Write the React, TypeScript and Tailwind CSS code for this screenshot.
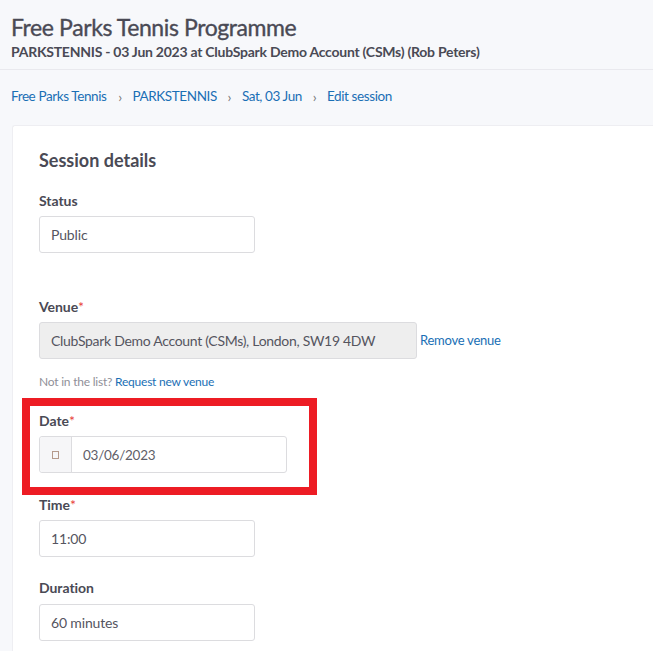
import React from "react";

const Label = ({ text, required }: { text: string; required?: boolean }) => (
  <div className="text-[14px] leading-[18px] font-bold text-[#4a4a55] h-[18px] tracking-[-0.05px]">
    {text}
    {required && <span className="text-[#e8403c] font-normal">*</span>}
  </div>
);

const Field = ({ value, className = "" }: { value: string; className?: string }) => (
  <div className={`h-[37px] w-[216px] bg-white border border-[#dcdcdf] rounded-[3px] flex items-center pl-[11px] text-[14px] text-[#55555f] tracking-[-0.15px] ${className}`}>
    {value}
  </div>
);

const Sep = () => <span className="text-[#777] text-[14px] w-[25px] flex justify-center">›</span>;

export default function App() {
  return (
    <div className="relative w-[653px] h-[651px] overflow-hidden bg-[#f7f8fb] font-['Lato','Liberation_Sans',sans-serif]">
      <div className="pl-[11px] pt-[13px] h-[70px] border-b border-[#e9e9ee]">
        <h1 className="text-[23px] leading-[29px] font-normal text-[#4a4a55] tracking-[-0.4px] [-webkit-text-stroke:0.35px_#4a4a55]">Free Parks Tennis Programme</h1>
        <p className="text-[14px] leading-[17px] mt-[1px] font-bold text-[#4a4a55] tracking-[-0.25px]">
          PARKSTENNIS - 03 Jun 2023 at ClubSpark Demo Account (CSMs) (Rob Peters)
        </p>
      </div>

      <div className="flex items-center pl-[11px] mt-[17px] h-[18px] text-[13.5px] text-[#1a6fb5] tracking-[-0.4px]">
        <span className="mr-[1px]">Free Parks Tennis</span>
        <Sep />
        <span>PARKSTENNIS</span>
        <Sep />
        <span>Sat, 03 Jun</span>
        <Sep />
        <span>Edit session</span>
      </div>

      <div className="ml-[12px] mt-[20px] bg-white border-t border-l border-[#eeeef2] rounded-tl-[3px] pl-[26px] pt-[23px] h-[600px]">
        <h2 className="text-[18px] leading-[22px] font-bold text-[#4a4a55]">Session details</h2>

        <div className="mt-[21px]">
          <Label text="Status" />
          <Field value="Public" className="mt-[6px]" />
        </div>

        <div className="mt-[45px]">
          <Label text="Venue" required />
          <div className="flex items-center mt-[6px]">
            <div className="h-[37px] w-[378px] bg-[#eeeeee] border border-[#dcdcdf] rounded-[3px] flex items-center pl-[11px] text-[14px] text-[#55555f] tracking-[-0.3px]">
              ClubSpark Demo Account (CSMs), London, SW19 4DW
            </div>
            <span className="ml-[3px] text-[13px] text-[#1a6fb5] tracking-[-0.25px]">Remove venue</span>
          </div>
          <p className="mt-[14px] text-[12px] leading-[17px] text-[#8f8f98] tracking-[-0.22px]">
            Not in the list? <span className="text-[#1a6fb5]">Request new venue</span>
          </p>
        </div>

        <div className="mt-[22px]">
          <Label text="Date" required />
          <div className="flex mt-[6px] h-[37px] w-[248px] bg-white border border-[#dcdcdf] rounded-[3px]">
            <div className="w-[32px] bg-[#f6f6f8] border-r border-[#dcdcdf] rounded-l-[3px] flex items-center justify-center">
              <span className="w-[7px] h-[8px] border border-[#b59a8c]" />
            </div>
            <div className="flex items-center pl-[11px] pt-[1px] text-[13.5px] text-[#5f5f69] tracking-[-0.25px]">03/06/2023</div>
          </div>
        </div>

        <div className="mt-[23px]">
          <Label text="Time" required />
          <Field value="11:00" className="mt-[6px]" />
        </div>

        <div className="mt-[22px]">
          <Label text="Duration" />
          <Field value="60 minutes" className="mt-[7px] tracking-[-0.3px]" />
        </div>
      </div>

      {/* red annotation drawn over the date field */}
      <div className="absolute left-[22px] top-[398px] w-[295px] h-[97px] border-[8px] border-[#ed1c24]" />
    </div>
  );
}
